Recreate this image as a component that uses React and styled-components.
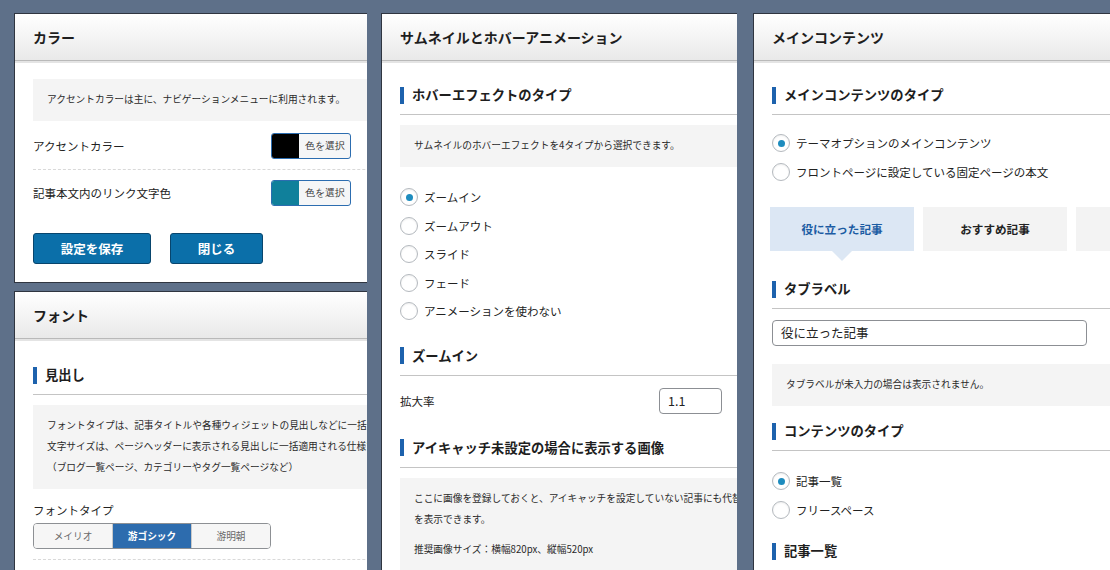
import React from "react";
import styled, { createGlobalStyle } from "styled-components";

const GlobalStyle = createGlobalStyle`
     * {
          box-sizing: border-box;
     }
     html,
     body {
          margin: 0;
          padding: 0;
          height: 100%;
          overflow: hidden;
     }
     body {
          background: #5e7089;
          color: #222;
          font-family: "Noto Sans CJK JP", "Liberation Sans", sans-serif;
     }
`;

const Screen = styled.div`
     display: flex;
     align-items: flex-start;
     height: 570px;
     padding: 13px 0 0 14px;
     overflow: hidden;
`;

const Column = styled.div`
     display: flex;
     flex-direction: column;
     gap: 8px;
     flex: none;
     width: ${(p) => p.$width}px;
     margin-right: ${(p) => p.$gap || 0}px;
`;

const Panel = styled.section`
     background: #fff;
     border: 1px solid #2f3540;
     border-right: none;
     overflow: hidden;
`;

const PanelHeader = styled.header`
     display: flex;
     align-items: center;
     height: 47px;
     padding: 0 18px;
     background: linear-gradient(#ffffff, #e9e9e9);
     border-bottom: 1px solid #b9b9b9;
     box-shadow: 0 2px 0 #e4e4e4;
`;

const PanelTitle = styled.h2`
     margin: 0;
     font-size: 14px;
     font-weight: 700;
     line-height: 20px;
     color: #1e1e1e;
`;

const PanelBody = styled.div`
     width: 480px;
     padding: 0 0 ${(p) => p.$bottom ?? 18}px 18px;
`;

const SectionHeading = styled.h3`
     display: flex;
     align-items: center;
     gap: 8px;
     height: 30px;
     margin: ${(p) => p.$mt}px 0 0;
     padding-bottom: 9px;
     border-bottom: 1px solid #c4c4c4;
     font-size: 13.3px;
     font-weight: 700;
     line-height: 20px;
     color: #1e1e1e;

     &::before {
          content: "";
          flex: none;
          width: 4px;
          height: 17px;
          background: #1d62ad;
     }
`;

const Note = styled.div`
     margin-top: ${(p) => p.$mt}px;
     padding: 10px 14px 11px;
     background: #f4f4f4;
     font-size: 9.7px;
     line-height: 21px;
     color: #2a2a2a;
     white-space: nowrap;
`;

const NoteText = styled.p`
     margin: ${(p) => p.$mt || 0}px 0 0;
`;

const FieldRow = styled.div`
     display: grid;
     grid-template-columns: ${(p) => p.$label}px auto;
     justify-content: start;
     align-items: center;
     margin-top: ${(p) => p.$mt || 0}px;
     padding: ${(p) => p.$pad || "0"};
     border-bottom: ${(p) => (p.$divider ? "1px dashed #d9d9d9" : "none")};
     font-size: 11.5px;
     line-height: 20px;
`;

const ColorButton = styled.button`
     display: flex;
     width: 80px;
     height: 26px;
     padding: 0;
     border: 1px solid #2c6db0;
     border-radius: 3px;
     overflow: hidden;
     background: #f5f6f7;
     cursor: pointer;
`;

const Swatch = styled.span`
     flex: none;
     width: 27px;
     height: 100%;
     background: ${(p) => p.$color};
`;

const ColorLabel = styled.span`
     flex: 1;
     align-self: center;
     font-family: inherit;
     font-size: 9.5px;
     color: #333;
     text-align: center;
`;

const ActionRow = styled.div`
     display: flex;
     gap: 19px;
     margin-top: 17px;
`;

const ActionButton = styled.button`
     width: ${(p) => p.$w}px;
     height: 31px;
     border: 1px solid #08456d;
     border-radius: 3px;
     background: #0b6fa9;
     color: #fff;
     font-family: inherit;
     font-size: 12.5px;
     font-weight: 700;
     cursor: pointer;
`;

const FieldBlock = styled.div`
     margin-top: ${(p) => p.$mt}px;
     padding-bottom: 10px;
     border-bottom: 1px dashed #d9d9d9;
`;

const FieldLabel = styled.div`
     font-size: 11.5px;
     line-height: 20px;
`;

const Segmented = styled.div`
     display: flex;
     width: 238px;
     height: 26px;
     margin-top: 3px;
     border: 1px solid #8d9094;
     border-radius: 4px;
     overflow: hidden;
`;

const Segment = styled.button`
     flex: 1;
     padding: 0;
     border: 0;
     border-left: ${(p) => (p.$first ? "0" : "1px solid #c9c9c9")};
     background: ${(p) => (p.$active ? "#2d6cae" : "#f6f6f6")};
     color: ${(p) => (p.$active ? "#fff" : "#6a6a6a")};
     font-family: inherit;
     font-size: 9.7px;
     font-weight: ${(p) => (p.$active ? 700 : 400)};
`;

const RadioList = styled.div`
     display: flex;
     flex-direction: column;
     margin-top: ${(p) => p.$mt}px;
`;

const RadioRow = styled.div`
     display: flex;
     align-items: center;
     gap: 6px;
     height: 28.5px;
     font-size: 11.5px;
     line-height: 20px;
`;

const RadioMark = styled.span`
     display: grid;
     place-items: center;
     flex: none;
     width: 18px;
     height: 18px;
     border: 1px solid #b4b9be;
     border-radius: 50%;
     background: #fff;
     box-shadow: inset 0 1px 2px rgba(0, 0, 0, 0.07);

     &::after {
          content: "";
          width: 7px;
          height: 7px;
          border-radius: 50%;
          background: ${(p) => (p.$checked ? "#1e8cbe" : "transparent")};
     }
`;

const NumberInput = styled.div`
     width: 63px;
     height: 26px;
     padding: 0 8px;
     border: 1px solid #8c8f94;
     border-radius: 4px;
     font-size: 12.5px;
     line-height: 24px;
`;

const TextInput = styled.div`
     width: 315px;
     height: 26px;
     margin-top: ${(p) => p.$mt}px;
     padding: 0 8px;
     border: 1px solid #8c8f94;
     border-radius: 4px;
     font-size: 12.5px;
     line-height: 24px;
`;

const Tabs = styled.div`
     display: flex;
     gap: 9px;
     margin: ${(p) => p.$mt}px 0 0 -2px;
`;

const Tab = styled.div`
     position: relative;
     display: flex;
     align-items: center;
     justify-content: center;
     flex: none;
     width: 144px;
     height: 44px;
     background: ${(p) => (p.$active ? "#dce7f4" : "#f3f3f3")};
     color: ${(p) => (p.$active ? "#1c5ca3" : "#222")};
     font-size: 11.6px;
     font-weight: 700;

     &::after {
          content: "";
          display: ${(p) => (p.$active ? "block" : "none")};
          position: absolute;
          top: 100%;
          left: 50%;
          margin-left: -10px;
          border-left: 10px solid transparent;
          border-right: 10px solid transparent;
          border-top: 10px solid #dce7f4;
     }
`;

const hoverTypes = ["ズームイン", "ズームアウト", "スライド", "フェード", "アニメーションを使わない"];

function Radios({ items, checked, mt }) {
     return (
          <RadioList $mt={mt}>
               {items.map((item, i) => (
                    <RadioRow key={item}>
                         <RadioMark $checked={i === checked} />
                         {item}
                    </RadioRow>
               ))}
          </RadioList>
     );
}

function ColorPanel() {
     return (
          <Panel>
               <PanelHeader>
                    <PanelTitle>カラー</PanelTitle>
               </PanelHeader>
               <PanelBody>
                    <Note $mt={18}>アクセントカラーは主に、ナビゲーションメニューに利用されます。</Note>
                    <FieldRow $label={238} $pad="12px 0 10px" $divider>
                         <span>アクセントカラー</span>
                         <ColorButton>
                              <Swatch $color="#000" />
                              <ColorLabel>色を選択</ColorLabel>
                         </ColorButton>
                    </FieldRow>
                    <FieldRow $label={238} $pad="10px 0">
                         <span>記事本文内のリンク文字色</span>
                         <ColorButton>
                              <Swatch $color="#10809b" />
                              <ColorLabel>色を選択</ColorLabel>
                         </ColorButton>
                    </FieldRow>
                    <ActionRow>
                         <ActionButton $w={118}>設定を保存</ActionButton>
                         <ActionButton $w={93}>閉じる</ActionButton>
                    </ActionRow>
               </PanelBody>
          </Panel>
     );
}

function FontPanel() {
     return (
          <Panel>
               <PanelHeader>
                    <PanelTitle>フォント</PanelTitle>
               </PanelHeader>
               <PanelBody>
                    <SectionHeading $mt={26}>見出し</SectionHeading>
                    <Note $mt={10}>
                         フォントタイプは、記事タイトルや各種ウィジェットの見出しなどに一括適用されます。
                         <br />
                         文字サイズは、ページヘッダーに表示される見出しに一括適用される仕様です。
                         <br />
                         （ブログ一覧ページ、カテゴリーやタグ一覧ページなど）
                    </Note>
                    <FieldBlock $mt={11}>
                         <FieldLabel>フォントタイプ</FieldLabel>
                         <Segmented>
                              <Segment $first>メイリオ</Segment>
                              <Segment $active>游ゴシック</Segment>
                              <Segment>游明朝</Segment>
                         </Segmented>
                    </FieldBlock>
               </PanelBody>
          </Panel>
     );
}

function ThumbnailPanel() {
     return (
          <Panel>
               <PanelHeader>
                    <PanelTitle>サムネイルとホバーアニメーション</PanelTitle>
               </PanelHeader>
               <PanelBody>
                    <SectionHeading $mt={24}>ホバーエフェクトのタイプ</SectionHeading>
                    <Note $mt={10}>サムネイルのホバーエフェクトを4タイプから選択できます。</Note>
                    <Radios items={hoverTypes} checked={0} mt={16} />
                    <SectionHeading $mt={20}>ズームイン</SectionHeading>
                    <FieldRow $label={259} $mt={12}>
                         <span>拡大率</span>
                         <NumberInput>1.1</NumberInput>
                    </FieldRow>
                    <SectionHeading $mt={24}>アイキャッチ未設定の場合に表示する画像</SectionHeading>
                    <Note $mt={10}>
                         <NoteText>
                              ここに画像を登録しておくと、アイキャッチを設定していない記事にも代替画像
                              <br />
                              を表示できます。
                         </NoteText>
                         <NoteText $mt={9}>推奨画像サイズ：横幅820px、縦幅520px</NoteText>
                    </Note>
               </PanelBody>
          </Panel>
     );
}

function MainContentPanel() {
     return (
          <Panel>
               <PanelHeader>
                    <PanelTitle>メインコンテンツ</PanelTitle>
               </PanelHeader>
               <PanelBody>
                    <SectionHeading $mt={24}>メインコンテンツのタイプ</SectionHeading>
                    <Radios
                         items={["テーマオプションのメインコンテンツ", "フロントページに設定している固定ページの本文"]}
                         checked={0}
                         mt={14}
                    />
                    <Tabs $mt={21}>
                         <Tab $active>役に立った記事</Tab>
                         <Tab>おすすめ記事</Tab>
                         <Tab />
                    </Tabs>
                    <SectionHeading $mt={28}>タブラベル</SectionHeading>
                    <TextInput $mt={11}>役に立った記事</TextInput>
                    <Note $mt={18}>タブラベルが未入力の場合は表示されません。</Note>
                    <SectionHeading $mt={15}>コンテンツのタイプ</SectionHeading>
                    <Radios items={["記事一覧", "フリースペース"]} checked={0} mt={16} />
                    <SectionHeading $mt={17}>記事一覧</SectionHeading>
               </PanelBody>
          </Panel>
     );
}

export default function App() {
     return (
          <>
               <GlobalStyle />
               <Screen>
                    <Column $width={353} $gap={14}>
                         <ColorPanel />
                         <FontPanel />
                    </Column>
                    <Column $width={356} $gap={16}>
                         <ThumbnailPanel />
                    </Column>
                    <Column $width={420}>
                         <MainContentPanel />
                    </Column>
               </Screen>
          </>
     );
}
